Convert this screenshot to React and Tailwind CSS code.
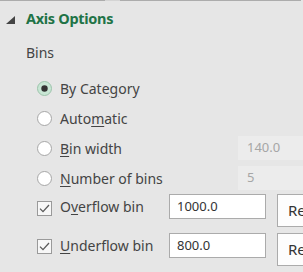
const RADIOS = [
  { pre: 'By Cate', key: 'g', post: 'ory', checked: true },
  { pre: 'Auto', key: 'm', post: 'atic' },
  { pre: '', key: 'B', post: 'in width', value: '140.0' },
  { pre: '', key: 'N', post: 'umber of bins', value: '5' },
];

const CHECKS = [
  { pre: 'O', key: 'v', post: 'erflow bin', value: '1000.0', box: 'mt-[7px]' },
  { pre: '', key: 'U', post: 'nderflow bin', value: '800.0', box: 'mt-[6px]' },
];

function Radio({ checked }) {
  return (
    <svg width="15" height="15" viewBox="0 0 15 15" className="shrink-0">
      <circle cx="7.5" cy="7.5" r="7" fill={checked ? '#c8e6d4' : '#ffffff'} stroke={checked ? '#9cc4ab' : '#a6a6a6'} />
      {checked && <circle cx="7.5" cy="7.5" r="3.2" fill="#333333" />}
    </svg>
  );
}

function Check() {
  return (
    <div className="w-[15px] h-[15px] shrink-0 border border-[#9a9a9a] bg-[#f7f7f7] flex items-center justify-center">
      <svg width="11" height="9" viewBox="0 0 11 9">
        <path d="M1 4.6 L4 7.6 L10 1" fill="none" stroke="#5a5a5a" strokeWidth="1.3" />
      </svg>
    </div>
  );
}

function Label({ pre, k, post }) {
  return (
    <span>
      {pre}
      <span className="underline underline-offset-2">{k}</span>
      {post}
    </span>
  );
}

export default function App() {
  return (
    <div className="w-[303px] h-[272px] overflow-hidden bg-[#e6e6e6] text-[#444444] font-['Segoe_UI','Noto_Sans',sans-serif]">
      <div className="flex h-px">
        <div className="w-[105px] bg-[#acacac]" />
        <div className="w-[15px] bg-[#d4d4d4]" />
        <div className="w-[181px] bg-[#acacac]" />
      </div>

      <div className="mt-[8px] h-[20px] flex items-center pl-[6px]">
        <svg width="9" height="8" viewBox="0 0 9 8" className="mt-[2px]">
          <polygon points="0,8 9,8 9,0" fill="#444444" />
        </svg>
        <span className="ml-[11px] text-[14.5px] font-bold text-[#217346] tracking-[-0.3px]">Axis Options</span>
      </div>

      <div className="mt-[13px] h-[20px] flex items-center pl-[26px] text-[14px]">Bins</div>

      <div className="mt-[11px] flex flex-col">
        {RADIOS.map((r) => (
          <div key={r.post} className="h-[30px] flex items-center pl-[37px] text-[14px]">
            <Radio checked={r.checked} />
            <div className="ml-[8px] w-[178px] shrink-0 whitespace-nowrap">
              <Label pre={r.pre} k={r.key} post={r.post} />
            </div>
            {r.value && (
              <div className="w-[80px] h-[24px] shrink-0 bg-[#ececec] text-[#a6a6a6] text-[13px] flex items-center pl-[9px]">
                {r.value}
              </div>
            )}
          </div>
        ))}
      </div>

      <div className="mt-[1px] flex flex-col gap-[6px]">
        {CHECKS.map((c) => (
          <div key={c.post} className="h-[33px] flex items-start pl-[37px] text-[14px]">
            <div className={c.box}>
              <Check />
            </div>
            <div className="ml-[8px] w-[109px] shrink-0 whitespace-nowrap h-[25px] flex items-center">
              <Label pre={c.pre} k={c.key} post={c.post} />
            </div>
            <div className="w-[97px] h-[25px] shrink-0 bg-white border border-[#ababab] text-[13px] text-[#333333] flex items-center pl-[7px]">
              {c.value}
            </div>
            <div className="ml-[11px] w-[60px] h-[33px] shrink-0 bg-[#fdfdfd] border border-[#ababab] text-[15px] text-[#333333] flex items-center pl-[10px]">
              Reset
            </div>
          </div>
        ))}
      </div>
    </div>
  );
}
